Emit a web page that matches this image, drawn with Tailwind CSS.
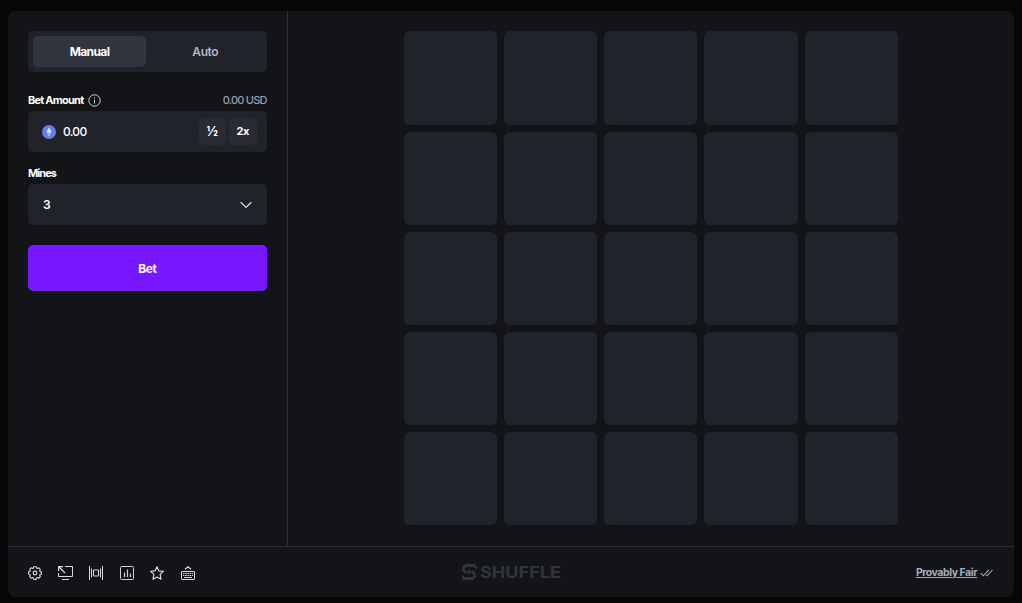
<!DOCTYPE html>
<html lang="en">
<head>
    <meta charset="UTF-8">
    <meta name="viewport" content="width=device-width, initial-scale=1.0">
    <script src="https://cdn.jsdelivr.net/npm/@tailwindcss/browser@4"></script>
    <title>Mines</title>
</head>
<body class="bg-[#070707] font-['Inter',sans-serif] text-white">
    <div class="h-[603px] pt-[11px] pb-[6px] pl-2 pr-2 overflow-hidden">
        <div class="h-full bg-[#131418] rounded-lg flex flex-col">
            <div class="flex h-[535px]">
                <!-- Bet controls -->
                <div class="w-[280px] shrink-0 border-r border-[#2b2d38] pl-5 pr-[20.4px] pt-5">
                    <div class="h-[41px] bg-[#202329] rounded-[5px] p-[5px] flex">
                        <button class="w-[113px] h-[31px] bg-[#31353f] rounded-[5px] text-xs font-bold tracking-[-0.6px]">Manual</button>
                        <button class="flex-1 text-xs font-semibold tracking-[-0.4px] text-[#afb7c3] pl-[3px]">Auto</button>
                    </div>

                    <div class="flex items-center mt-[21px] h-[14px] text-[11px]">
                        <span class="font-bold tracking-[-0.78px]">Bet Amount</span>
                        <svg class="ml-[5px] w-[13px] h-[13px]" viewBox="0 0 13 13" fill="none" stroke="#d0d0d2">
                            <circle cx="6.5" cy="6.5" r="5.7" />
                            <path d="M6.5 5.6v4M6.5 3.3v1.2" />
                        </svg>
                        <span class="ml-auto text-[#94a0b3] font-medium tracking-[-0.8px]">0.00 USD</span>
                    </div>
                    <div class="mt-[4px] h-[41px] bg-[#202329] rounded-[5px] flex items-center pl-[14px] pr-[10px]">
                        <svg class="w-[14px] h-[14px]" viewBox="0 0 14 14">
                            <circle cx="7" cy="7" r="7" fill="#627eea" />
                            <path d="M7 2.4L4.3 7.1 7 8.7l2.7-1.6z" fill="#dce3fc" />
                            <path d="M4.5 8L7 11.6 9.5 8 7 9.4z" fill="#c1cdf8" />
                        </svg>
                        <span class="ml-[7px] text-xs font-medium tracking-[-0.7px]">0.00</span>
                        <button class="ml-auto w-[27px] h-[27px] bg-[#282b34] rounded-[5px] text-[13px] font-bold">½</button>
                        <button class="ml-[3px] w-[28px] h-[27px] bg-[#282b34] rounded-[5px] text-[11px] font-bold tracking-[-0.6px]">2x</button>
                    </div>

                    <div class="mt-[14px] h-[14px] leading-[14px] text-[11px] font-bold tracking-[-0.95px]">Mines</div>
                    <div class="mt-[4px] h-[41px] bg-[#202329] rounded-[5px] flex items-center justify-between pl-[15px] pr-[15px]">
                        <span class="text-xs font-semibold">3</span>
                        <svg class="w-3 h-2" viewBox="0 0 12 8" fill="none" stroke="#dcdcde" stroke-width="1.3">
                            <path d="M.7 1.2L6 6.4l5.3-5.2" />
                        </svg>
                    </div>

                    <button class="mt-[20.4px] w-full h-[46px] pt-px bg-[#7717ff] rounded-[5px] text-xs font-bold tracking-[-0.4px]">Bet</button>
                </div>

                <!-- Mine field -->
                <div class="flex-1 pt-[20.4px] pl-[115.5px]">
                    <div id="board" class="grid grid-cols-5 grid-rows-5 gap-[7px] w-[494.5px] h-[494px]"></div>
                </div>
            </div>

            <!-- Footer -->
            <div class="flex-1 border-t border-[#2b2d38] px-5 grid grid-cols-3 items-center">
                <div class="flex items-center gap-[16.5px] pt-px">
                    <svg class="w-[14px] h-[14px]" viewBox="0 0 14 14" fill="none" stroke="#dadadc" stroke-width="1.1" stroke-linejoin="round">
                        <path d="M5.8.7h2.4l.5 1.5.6.3 1.5-.7 1.5 1.6-.6 1.4.3.7 1.4.4v2.2l-1.4.5-.3.7.6 1.4-1.5 1.6-1.5-.7-.6.3-.5 1.5H5.8l-.5-1.5-.6-.3-1.5.7-1.5-1.6.6-1.4-.3-.7L.6 8.1V5.9L2 5.5l.3-.7-.6-1.4 1.5-1.6 1.5.7.6-.3z" />
                        <circle cx="7" cy="7" r="1.9" />
                    </svg>
                    <svg class="-ml-px w-[15px] h-[14px]" viewBox="0 0 15 14" fill="none" stroke="#dadadc">
                        <path d="M7 .5h7.5v10H.5V7M4 13.5h7" />
                        <path d="M7 7L1 1M.6 5V.6H5" stroke-width="1.2" />
                    </svg>
                    <svg class="w-[14px] h-[14px]" viewBox="0 0 14 14" fill="none" stroke="#dadadc">
                        <path d="M.5 0v14M13.5 0v14M2.5 2.5v9M11.5 2.5v9M4.5 4h5v6h-5z" />
                    </svg>
                    <svg class="w-[14px] h-[14px]" viewBox="0 0 14 14" fill="none" stroke="#d0d0d2">
                        <rect x=".5" y=".5" width="13" height="13" rx="1" />
                        <path d="M4.5 6.5V11M7.5 3.5V11M10.5 7.5V11" stroke-width="1.2" />
                    </svg>
                    <svg class="w-[14px] h-[14px]" viewBox="0 0 14 14" fill="none" stroke="#dadadc" stroke-width="1.2" stroke-linejoin="round">
                        <path d="M7 .7l1.9 4.2 4.5.5-3.3 3 .9 4.8-4-2.3-4 2.3.9-4.8-3.3-3 4.5-.5z" />
                    </svg>
                    <svg class="w-[14px] h-[14px]" viewBox="0 0 14 14" fill="none" stroke="#dadadc">
                        <path d="M4 3.2L7 .8l3 2.4" stroke-width="1.2" />
                        <rect x=".5" y="5.5" width="13" height="8" rx=".5" />
                        <path d="M2 7.5h10M2 9.5h10" stroke-dasharray="1.5 .7" />
                        <path d="M3 11.5h8" />
                    </svg>
                </div>
                <div class="flex justify-center">
                    <svg class="w-[99px] h-[16px]" viewBox="0 0 99 16" fill="#30343f">
                        <path d="M14 4.500V3.500L12 1.500H3.500l-2 2V6l1.500 1.800h1.500M0 11.500v1l2 2h8.500l2-2V10L11 8.200H9.500" fill="none" stroke="#30343f" stroke-width="2.800" />
                        <path d="M7 4.800l.9 2.300 2.300.9-2.300.9L7 11.200l-.9-2.300L3.800 8l2.300-.9z" />
                        <text x="18" y="13.5" font-family="Inter, sans-serif" font-size="15.5" font-weight="700" textLength="81" lengthAdjust="spacingAndGlyphs">SHUFFLE</text>
                    </svg>
                </div>
                <div class="flex items-center justify-end pr-px pt-px">
                    <a href="#" class="text-[10.5px] font-bold tracking-[-0.45px] text-[#a2acbd] underline underline-offset-1">Provably Fair</a>
                    <svg class="ml-[3px] w-[13px] h-2" viewBox="0 0 13 8" fill="none" stroke="#a2acbd" stroke-width="1.1">
                        <path d="M.7 4.2l2.6 2.6L8.8 1M6 5.8l1.2 1L12.5 1" />
                    </svg>
                </div>
            </div>
        </div>
    </div>

    <script>
        const board = document.getElementById('board');
        for (let i = 0; i < 25; i++) {
            const tile = document.createElement('button');
            tile.className = 'bg-[#202329] rounded-md';
            board.appendChild(tile);
        }
    </script>
</body>
</html>
